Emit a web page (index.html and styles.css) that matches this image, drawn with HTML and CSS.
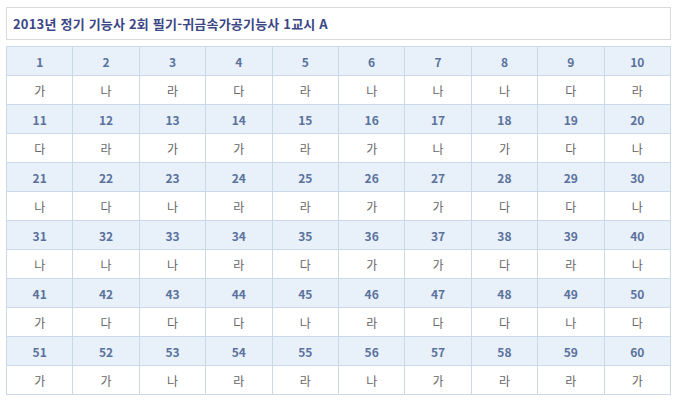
FILE: index.html
```html
<!DOCTYPE html>
<html lang="ko">
<head>
<meta charset="utf-8">
<link rel="stylesheet" href="styles.css">
</head>
<body>
<div class="page">
  <div class="title">2013년 정기 기능사 2회 필기-귀금속가공기능사 1교시 A</div>
  <table class="answers">
    <tr class="num"><td>1</td><td>2</td><td>3</td><td>4</td><td>5</td><td>6</td><td>7</td><td>8</td><td>9</td><td>10</td></tr>
    <tr class="ans"><td>가</td><td>나</td><td>라</td><td>다</td><td>라</td><td>나</td><td>나</td><td>나</td><td>다</td><td>라</td></tr>
    <tr class="num"><td>11</td><td>12</td><td>13</td><td>14</td><td>15</td><td>16</td><td>17</td><td>18</td><td>19</td><td>20</td></tr>
    <tr class="ans"><td>다</td><td>라</td><td>가</td><td>가</td><td>라</td><td>가</td><td>나</td><td>가</td><td>다</td><td>나</td></tr>
    <tr class="num"><td>21</td><td>22</td><td>23</td><td>24</td><td>25</td><td>26</td><td>27</td><td>28</td><td>29</td><td>30</td></tr>
    <tr class="ans"><td>나</td><td>다</td><td>나</td><td>라</td><td>라</td><td>가</td><td>가</td><td>다</td><td>다</td><td>나</td></tr>
    <tr class="num"><td>31</td><td>32</td><td>33</td><td>34</td><td>35</td><td>36</td><td>37</td><td>38</td><td>39</td><td>40</td></tr>
    <tr class="ans"><td>나</td><td>나</td><td>나</td><td>라</td><td>다</td><td>가</td><td>가</td><td>다</td><td>라</td><td>나</td></tr>
    <tr class="num"><td>41</td><td>42</td><td>43</td><td>44</td><td>45</td><td>46</td><td>47</td><td>48</td><td>49</td><td>50</td></tr>
    <tr class="ans"><td>가</td><td>다</td><td>다</td><td>다</td><td>나</td><td>라</td><td>다</td><td>다</td><td>나</td><td>다</td></tr>
    <tr class="num"><td>51</td><td>52</td><td>53</td><td>54</td><td>55</td><td>56</td><td>57</td><td>58</td><td>59</td><td>60</td></tr>
    <tr class="ans"><td>가</td><td>가</td><td>나</td><td>라</td><td>라</td><td>나</td><td>가</td><td>라</td><td>라</td><td>가</td></tr>
  </table>
</div>
</body>
</html>
```
FILE: styles.css
```css
html, body {
  margin: 0;
  padding: 0;
  background: #ffffff;
}
.page {
  padding: 7px 6px 0 6px;
  font-family: "Noto Sans CJK KR", "DejaVu Sans", sans-serif;
}
.title {
  box-sizing: border-box;
  height: 33px;
  border: 1px solid #d9d9d9;
  padding: 0 6px;
  line-height: 31px;
  font-size: 13px;
  font-weight: bold;
  letter-spacing: 0.2px;
  color: #3b4785;
  white-space: nowrap;
}
.answers {
  margin-top: 6px;
  width: 665px;
  border-collapse: collapse;
  table-layout: fixed;
}
.answers td {
  height: 28px;
  padding: 0;
  border: 1px solid #cbd8e8;
  text-align: center;
  vertical-align: middle;
  font-size: 12px;
}
.num td {
  background: #e8f0fa;
  color: #5a729c;
  font-weight: bold;
}
.ans td {
  background: #ffffff;
  color: #666666;
}
```
